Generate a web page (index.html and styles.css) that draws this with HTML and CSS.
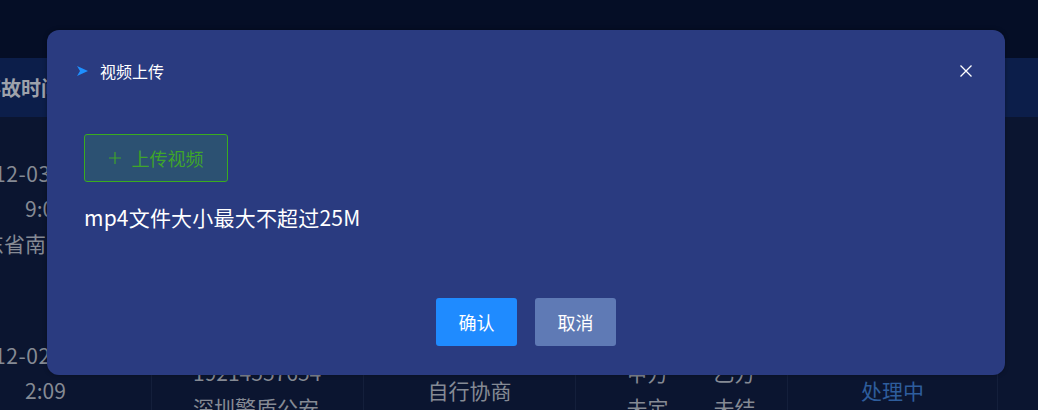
FILE: index.html
```html
<!DOCTYPE html>
<html lang="zh-CN">
<head>
<meta charset="utf-8">
<title>视频上传</title>
<link rel="stylesheet" href="styles.css">
</head>
<body>
<div class="page">
  <div class="topbar"></div>
  <div class="table">
    <div class="th th-first"><span class="h1">事故时间</span></div>
    <div class="th">联系方式</div>
    <div class="th">处理方式</div>
    <div class="th">责任认定</div>
    <div class="th">状态</div>
    <div class="th th-fill"></div>

    <div class="td td-first">
      <div class="ln l1">2022-12-03</div>
      <div class="ln l2">9:05</div>
      <div class="ln l3">广东省南山区</div>
    </div>
    <div class="td col2"></div>
    <div class="td"></div>
    <div class="td two"></div>
    <div class="td"></div>
    <div class="td td-fill"></div>

    <div class="td td-first">
      <div class="ln l1">2022-12-02</div>
      <div class="ln l2">2:09</div>
      <div class="ln l3">广东省深圳市</div>
    </div>
    <div class="td col2">
      <div class="ln">李先生</div>
      <div class="ln">19214557654</div>
      <div class="ln">深圳警盾公安</div>
      <div class="ln">福田区</div>
    </div>
    <div class="td"><div class="ln">自行协商</div></div>
    <div class="td two"><div class="ln"><span>甲方</span><span>乙方</span></div><div class="ln"><span>未定</span><span>未结</span></div></div>
    <div class="td"><div class="ln status">处理中</div></div>
    <div class="td td-fill"></div>
  </div>
</div>

<div class="modal">
  <div class="modal-header">
    <div class="modal-title">
      <svg class="arrow" width="11" height="10" viewBox="0 0 11 10"><polygon points="0,0 11,5 0,10 3,5" fill="#1e90ff"/></svg>
      <span>视频上传</span>
    </div>
    <svg class="close" width="12" height="12" viewBox="0 0 12 12"><path d="M0.5 0.5 L11.5 11.5 M11.5 0.5 L0.5 11.5" stroke="#ffffff" stroke-width="1.3" fill="none"/></svg>
  </div>
  <div class="modal-body">
    <button class="upload-btn">
      <svg width="12" height="12" viewBox="0 0 12 12"><path d="M6 0 V12 M0 6 H12" stroke="#3fa52a" stroke-width="1.2" fill="none"/></svg>
      <span>上传视频</span>
    </button>
    <p class="tip">mp4文件大小最大不超过25M</p>
  </div>
  <div class="modal-footer">
    <button class="btn btn-primary">确认</button>
    <button class="btn btn-cancel">取消</button>
  </div>
</div>
</body>
</html>
```

FILE: styles.css
```css
html, body {
  margin: 0;
  padding: 0;
}
body {
  width: 1038px;
  height: 410px;
  overflow: hidden;
  background: #0b1530;
  font-family: "Noto Sans CJK SC", "Noto Sans", sans-serif;
  position: relative;
}
.page {
  display: flex;
  flex-direction: column;
}
.topbar {
  height: 58px;
  background: #050e26;
}
.table {
  display: grid;
  grid-template-columns: 212px 212px 212px 212px 210px 1fr;
  grid-template-rows: 59px 182px 182px;
  margin-left: -60px;
  width: 1098px;
}
.th {
  background: #0c1e4a;
  color: #9ea2ab;
  font-weight: bold;
  font-size: 20px;
  display: flex;
  align-items: center;
  justify-content: center;
}
.th-first {
  justify-content: flex-start;
}
.th-first .h1 {
  margin-left: 41px;
}
.td {
  border-right: 1px solid #141f3b;
  display: flex;
  flex-direction: column;
  justify-content: center;
  align-items: center;
  color: #858a94;
  font-size: 21px;
  overflow: visible;
}
.td-fill {
  border-right: none;
}
.ln {
  line-height: 35px;
  white-space: nowrap;
}
.td-first {
  align-items: flex-start;
}
.td-first .l1 {
  margin-left: -3px;
  letter-spacing: 0.6px;
}
.td-first .l2 {
  margin-left: 85px;
}
.td-first .l3 {
  margin-left: 22px;
}
.col2 {
  align-items: flex-start;
  padding-left: 41px;
}
.two {
  padding-left: 19px;
}
.two .ln {
  display: flex;
  gap: 45px;
}
.status {
  color: #2e5d9c;
}

.modal {
  position: absolute;
  left: 47px;
  top: 30px;
  width: 958px;
  height: 345px;
  box-sizing: border-box;
  background: #2a3b80;
  border-radius: 12px;
  box-shadow: 0 0 4px rgba(0, 0, 0, 0.35);
  display: flex;
  flex-direction: column;
  color: #ffffff;
}
.modal-header {
  height: 82px;
  display: flex;
  align-items: center;
  justify-content: space-between;
  padding: 0 33px 0 30px;
}
.modal-title {
  display: flex;
  align-items: center;
  gap: 12px;
  font-size: 16px;
}
.modal-body {
  padding: 22px 37px 0;
  display: flex;
  flex-direction: column;
  align-items: flex-start;
}
.upload-btn {
  width: 144px;
  height: 48px;
  box-sizing: border-box;
  border: 1px solid #3aac1f;
  border-radius: 3px;
  background: #2c5172;
  color: #3fa52a;
  font-family: inherit;
  font-size: 18px;
  display: flex;
  align-items: center;
  justify-content: center;
  gap: 11px;
  padding: 0;
}
.tip {
  margin: 21px 0 0;
  font-size: 21px;
  line-height: 28px;
  letter-spacing: 0.2px;
}
.modal-footer {
  margin-top: auto;
  padding-bottom: 29px;
  display: flex;
  justify-content: center;
  gap: 18px;
}
.btn {
  width: 81px;
  height: 48px;
  border: none;
  border-radius: 3px;
  color: #ffffff;
  font-family: inherit;
  font-size: 18px;
  padding: 0;
}
.btn-primary {
  background: #1f8bff;
}
.btn-cancel {
  background: #5f7ab5;
}
```
